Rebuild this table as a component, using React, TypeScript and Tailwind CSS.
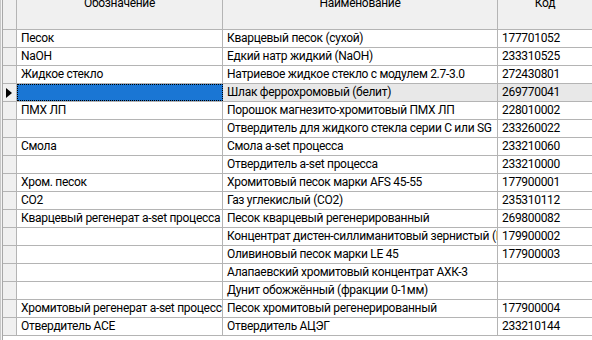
const rows: [string, string, string][] = [
  ["Песок", "Кварцевый песок (сухой)", "177701052"],
  ["NaOH", "Едкий натр жидкий (NaOH)", "233310525"],
  ["Жидкое стекло", "Натриевое жидкое стекло с модулем 2.7-3.0", "272430801"],
  ["", "Шлак феррохромовый (белит)", "269770041"],
  ["ПМХ ЛП", "Порошок магнезито-хромитовый ПМХ ЛП", "228010002"],
  ["", "Отвердитель для жидкого стекла серии C или SG", "233260022"],
  ["Смола", "Смола a-set процесса", "233210060"],
  ["", "Отвердитель a-set процесса", "233210000"],
  ["Хром. песок", "Хромитовый песок марки AFS 45-55", "177900001"],
  ["CO2", "Газ углекислый (CO2)", "235310112"],
  ["Кварцевый регенерат a-set процесса", "Песок кварцевый регенерированный", "269800082"],
  ["", "Концентрат дистен-силлиманитовый зернистый (КДСЗ)", "179900002"],
  ["", "Оливиновый песок марки LE 45", "177900003"],
  ["", "Алапаевский хромитовый концентрат АХК-3", ""],
  ["", "Дунит обожжённый (фракции 0-1мм)", ""],
  ["Хромитовый регенерат a-set процесса", "Песок хромитовый регенерированный", "177900004"],
  ["Отвердитель АСЕ", "Отвердитель АЦЭГ", "233210144"],
];

const SELECTED = 3;

export default function App() {
  return (
    <div
      className="w-[592px] h-[340px] overflow-hidden bg-white flex text-[12px] tracking-[-0.3px] text-black"
      style={{ fontFamily: 'Roboto, "Noto Sans", sans-serif' }}
    >
      {/* frame edge */}
      <div className="w-[3px] shrink-0 flex">
        <div className="w-px bg-[#c8c8c8]" />
        <div className="w-px bg-[#f4f4f4]" />
        <div className="w-px bg-[#a8a8a8]" />
      </div>

      <div className="flex-1 flex flex-col min-w-0">
        {/* header */}
        <div className="flex h-[30px] shrink-0 bg-[#f0f0f0] border-b border-[#b4b4b4]">
          <div className="w-[14px] shrink-0 border-r border-[#b4b4b4]" />
          <div className="w-[206px] shrink-0 border-r border-[#b4b4b4] flex justify-center overflow-hidden">
            <span className="-mt-[5px] leading-[17px] h-fit">Обозначение</span>
          </div>
          <div className="w-[275px] shrink-0 border-r border-[#b4b4b4] flex justify-center overflow-hidden">
            <span className="-mt-[5px] leading-[17px] h-fit">Наименование</span>
          </div>
          <div className="w-[94px] shrink-0 flex justify-center overflow-hidden">
            <span className="-mt-[5px] leading-[17px] h-fit">Код</span>
          </div>
        </div>

        {rows.map(([code, name, num], i) => {
          const sel = i === SELECTED;
          return (
            <div key={i} className="flex h-[18px] shrink-0 border-b border-[#b4b4b4] leading-[17px]">
              <div className="w-[14px] shrink-0 bg-[#f0f0f0] border-r border-[#b4b4b4] flex items-center pl-[3px]">
                {sel && (
                  <svg width="6" height="10" viewBox="0 0 6 10">
                    <path d="M0 0 L6 5 L0 10 Z" fill="#000" />
                  </svg>
                )}
              </div>
              <div
                className={
                  sel
                    ? "w-[206px] shrink-0 bg-[#1a76d4] border border-dotted border-black overflow-hidden whitespace-nowrap"
                    : "w-[206px] shrink-0 border-r border-[#b4b4b4] pl-[4px] overflow-hidden whitespace-nowrap"
                }
              >
                {code}
              </div>
              <div
                className={`w-[275px] shrink-0 border-r border-[#b4b4b4] pl-[4px] overflow-hidden whitespace-nowrap ${sel ? "bg-[#e8e8e8]" : ""}`}
              >
                {name}
              </div>
              <div className={`flex-1 pl-[4px] overflow-hidden whitespace-nowrap ${sel ? "bg-[#e8e8e8]" : ""}`}>
                {num}
              </div>
            </div>
          );
        })}

        <div className="flex flex-1">
          <div className="w-[14px] shrink-0" />
        </div>
      </div>
    </div>
  );
}
